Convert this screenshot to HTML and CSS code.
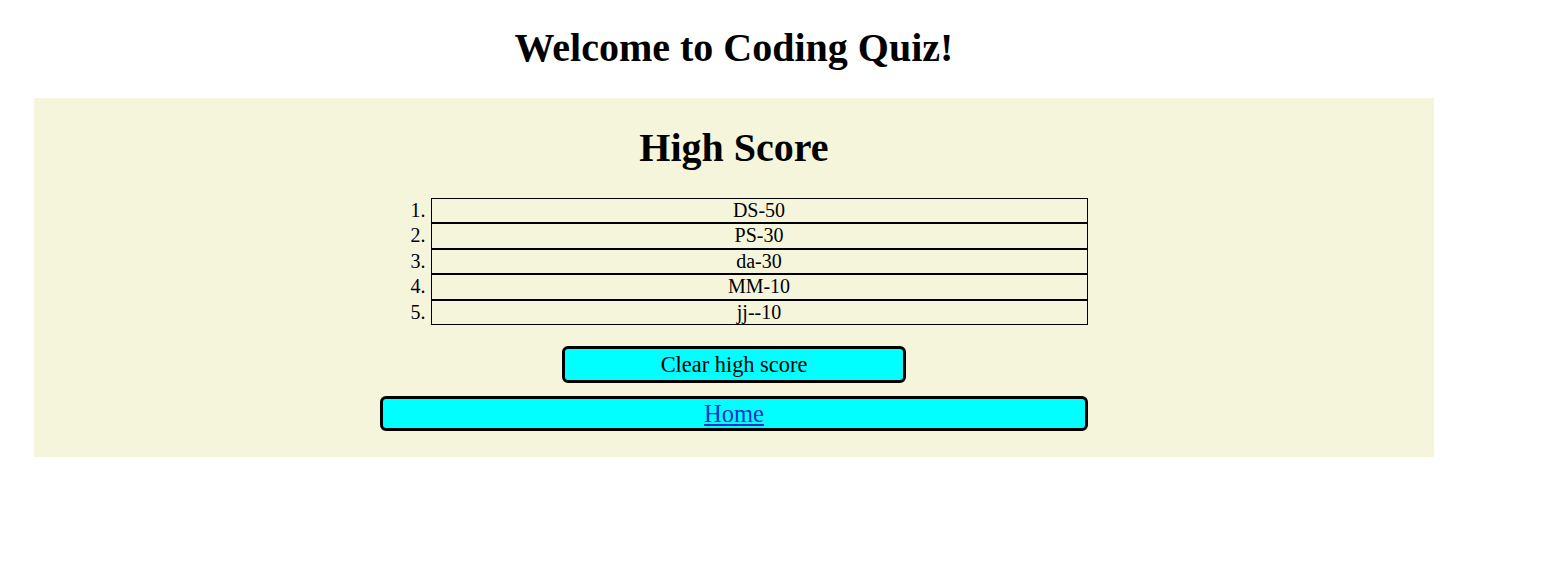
FILE: index.html
```html
<!DOCTYPE html>
<html lang="en">
<head>
<meta charset="utf-8">
<title>Coding Quiz - High Score</title>
<link rel="stylesheet" href="styles.css">
</head>
<body>
<div class="page">
  <h1 class="title">Welcome to Coding Quiz!</h1>
  <section class="panel">
    <h2 class="panel-title">High Score</h2>
    <ol class="scores">
      <li>DS-50</li>
      <li>PS-30</li>
      <li>da-30</li>
      <li>MM-10</li>
      <li>jj--10</li>
    </ol>
    <button class="clear-btn" type="button">Clear high score</button>
    <div class="home-btn"><a href="#" class="home-link">Home</a></div>
  </section>
</div>
</body>
</html>
```

FILE: styles.css
```css
html, body {
  margin: 0;
  padding: 0;
  background: #ffffff;
  font-family: "Liberation Serif", "Times New Roman", serif;
  color: #000;
}

.page {
  width: 1400px;
  margin-left: 34px;
  padding-top: 1px;
}

.title {
  font-size: 40px;
  line-height: 46px;
  font-weight: bold;
  text-align: center;
  margin: 24px 0 27px;
}

.panel {
  background: #f5f5dc;
  padding: 27px 0 26px;
  display: flex;
  flex-direction: column;
  align-items: center;
}

.panel-title {
  font-size: 40px;
  line-height: 46px;
  font-weight: bold;
  margin: 0 0 27px;
}

.scores {
  box-sizing: border-box;
  width: 707px;
  margin: 0;
  padding-left: 50px;
  list-style: decimal outside;
  font-size: 20px;
}

.scores li {
  border: 1px solid #000;
  text-align: center;
  line-height: 23.4px;
}

.clear-btn {
  box-sizing: border-box;
  margin-top: 21px;
  width: 344px;
  height: 37px;
  background: #00ffff;
  border: 3px solid #000;
  border-radius: 6px;
  font-family: "Liberation Serif", "Times New Roman", serif;
  font-size: 22.4px;
  color: #000;
  padding: 0;
}

.home-btn {
  box-sizing: border-box;
  margin-top: 13px;
  width: 708px;
  height: 35px;
  background: #00ffff;
  border: 3px solid #000;
  border-radius: 6px;
  text-align: center;
  font-size: 24.5px;
  line-height: 29px;
}

.home-link {
  color: #1a2ecc;
  text-decoration: underline;
}
```
